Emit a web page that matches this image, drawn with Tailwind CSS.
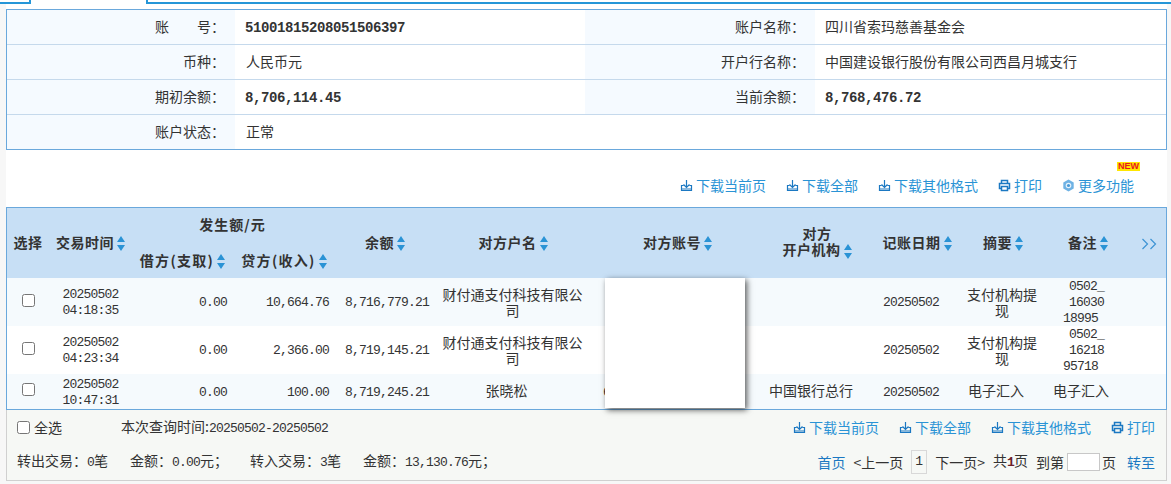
<!DOCTYPE html>
<html lang="zh-CN">
<head>
    <meta charset="UTF-8">
    <title>账户明细</title>
    <script src="https://cdn.jsdelivr.net/npm/@tailwindcss/browser@4"></script>
</head>
<body class="bg-[#f7f7f7] h-[484px] overflow-hidden font-['Noto_Sans_CJK_SC',sans-serif] text-[14px] leading-[16px] text-[#333]">
    <svg class="hidden">
        <symbol id="sort" viewBox="0 0 8 15"><path d="M4 0L8 6H0Z M0 9H8L4 15Z" fill="#2a93d5"/></symbol>
        <symbol id="dl" viewBox="0 0 13 13"><path d="M6.5 1V8M3.5 5.5L6.5 8.5L9.500 5.5M3.500 6.500H1.500V11.500H11.500V6.500H9.500M1.500 10H11.500" fill="none" stroke="#1b78c2" stroke-width="1.200"/></symbol>
        <symbol id="print" viewBox="0 0 13 13"><path d="M3.500 4V1.500H9.500V4M3 9.500H1.500V4.500H11.500V9.500H10M3.500 7.500H9.500V11.500H3.500Z" fill="none" stroke="#1b78c2" stroke-width="1.500"/></symbol>
        <symbol id="gear" viewBox="0 0 13 13"><path d="M6.500 0.500L11.700 3.500V9.500L6.500 12.500L1.300 9.500V3.500Z" fill="#6fb2e4"/><circle cx="6.500" cy="6.500" r="2.800" fill="#e8f3fb"/><circle cx="6.500" cy="6.500" r="1.600" fill="#4a9bd8"/></symbol>
    </svg>

    <!-- 顶部标签线 -->
    <div class="flex h-[4px] bg-white">
        <div class="w-[31px] border-b-2 border-r-2 border-[#2596d8]"></div>
        <div class="w-[115px]"></div>
        <div class="flex-1 border-b-2 border-l-2 border-[#2596d8]"></div>
    </div>

    <div class="w-[1161px] ml-[6px] bg-white">
        <div class="h-[5px]"></div>

        <!-- 账户信息 -->
        <div class="border border-[#6aa8dc]">
            <div class="grid grid-cols-[228px_350px_230px_1fr] h-[35px] border-b border-[#c5d9ec] items-stretch">
                <div class="bg-[#f5faff] flex items-center justify-end pr-[10px] pb-[2px]">账　　号：</div>
                <div class="flex items-center pl-[10px] pt-[1px] font-['Liberation_Mono'] font-bold text-[14px] tracking-[-0.400px]">51001815208051506397</div>
                <div class="bg-[#f5faff] flex items-center justify-end pr-[10px] pb-[2px]">账户名称：</div>
                <div class="flex items-center pl-[10px] pb-[2px]">四川省索玛慈善基金会</div>
            </div>
            <div class="grid grid-cols-[228px_350px_230px_1fr] h-[35px] border-b border-[#c5d9ec]">
                <div class="bg-[#f5faff] flex items-center justify-end pr-[10px] pb-[2px]">币种：</div>
                <div class="flex items-center pl-[11px] pb-[2px]">人民币元</div>
                <div class="bg-[#f5faff] flex items-center justify-end pr-[10px] pb-[2px]">开户行名称：</div>
                <div class="flex items-center pl-[10px] pb-[2px]">中国建设银行股份有限公司西昌月城支行</div>
            </div>
            <div class="grid grid-cols-[228px_350px_230px_1fr] h-[35px] border-b border-[#c5d9ec]">
                <div class="bg-[#f5faff] flex items-center justify-end pr-[10px] pb-[2px]">期初余额：</div>
                <div class="flex items-center pl-[10px] pt-[1px] font-['Liberation_Mono'] font-bold text-[14px] tracking-[-0.400px]">8,706,114.45</div>
                <div class="bg-[#f5faff] flex items-center justify-end pr-[10px] pb-[2px]">当前余额：</div>
                <div class="flex items-center pl-[10px] pt-[1px] font-['Liberation_Mono'] font-bold text-[14px] tracking-[-0.400px]">8,768,476.72</div>
            </div>
            <div class="grid grid-cols-[228px_350px_230px_1fr] h-[34px]">
                <div class="bg-[#f5faff] flex items-center justify-end pr-[10px] pb-[2px]">账户状态：</div>
                <div class="flex items-center pl-[11px] pb-[2px]">正常</div>
            </div>
        </div>

        <!-- 工具栏 -->
        <div class="relative h-[57px] flex items-end justify-end gap-[20px] pb-[14px] pr-[33px] text-[#2a93d5]">
            <a class="flex items-center gap-[3px]"><svg class="w-[13px] h-[13px]"><use href="#dl"/></svg>下载当前页</a>
            <a class="flex items-center gap-[3px]"><svg class="w-[13px] h-[13px]"><use href="#dl"/></svg>下载全部</a>
            <a class="flex items-center gap-[3px]"><svg class="w-[13px] h-[13px]"><use href="#dl"/></svg>下载其他格式</a>
            <a class="flex items-center gap-[3px]"><svg class="w-[13px] h-[13px]"><use href="#print"/></svg>打印</a>
            <a class="flex items-center gap-[3px]"><svg class="w-[13px] h-[13px]"><use href="#gear"/></svg>更多功能</a>
            <span class="absolute right-[27px] top-[12px] bg-[#ffe600] text-[#e8171f] font-['Liberation_Sans'] font-bold text-[9px] leading-[9px] px-[1px]">NEW</span>
        </div>

        <!-- 交易明细 -->
        <div class="relative border border-[#6aa8dc]">
            <table class="w-[1159px] table-fixed border-collapse">
                <colgroup>
                    <col class="w-[43px]"><col class="w-[83px]"><col class="w-[100px]"><col class="w-[102px]"><col class="w-[100px]"><col class="w-[155px]"><col class="w-[175px]"><col class="w-[110px]"><col class="w-[80px]"><col class="w-[90px]"><col class="w-[85px]"><col class="w-[36px]">
                </colgroup>
                <thead class="bg-[#c7dff5] tracking-[0.500px]">
                    <tr class="h-[35px]">
                        <th rowspan="2" class="font-bold pb-[2px] pr-[1px]">选择</th>
                        <th rowspan="2" class="font-bold whitespace-nowrap pb-[2px] pr-[2px]">交易时间<svg class="inline w-[8px] h-[15px] ml-[3px] align-[-3px]"><use href="#sort"/></svg></th>
                        <th colspan="2" class="font-bold pb-[3px] pr-[3px] tracking-[1px]">发生额/元</th>
                        <th rowspan="2" class="font-bold pb-[2px]">余额<svg class="inline w-[8px] h-[15px] ml-[3px] align-[-3px]"><use href="#sort"/></svg></th>
                        <th rowspan="2" class="font-bold pb-[2px] pl-[1px]">对方户名<svg class="inline w-[8px] h-[15px] ml-[3px] align-[-3px]"><use href="#sort"/></svg></th>
                        <th rowspan="2" class="font-bold pb-[2px]">对方账号<svg class="inline w-[8px] h-[15px] ml-[3px] align-[-3px]"><use href="#sort"/></svg></th>
                        <th rowspan="2" class="font-bold pr-[6px] pb-[3px] leading-[16px]">对方<br>开户机构<svg class="inline w-[8px] h-[15px] ml-[3px] align-[-4px] -mt-[2px]"><use href="#sort"/></svg></th>
                        <th rowspan="2" class="font-bold whitespace-nowrap pb-[2px] pl-[4px]">记账日期<svg class="inline w-[8px] h-[15px] ml-[3px] align-[-3px]"><use href="#sort"/></svg></th>
                        <th rowspan="2" class="font-bold pl-[6px] pb-[2px]">摘要<svg class="inline w-[8px] h-[15px] ml-[3px] align-[-3px]"><use href="#sort"/></svg></th>
                        <th rowspan="2" class="font-bold pb-[2px] pl-[1px]">备注<svg class="inline w-[8px] h-[15px] ml-[3px] align-[-3px]"><use href="#sort"/></svg></th>
                        <th rowspan="2" class="pl-[2px] pb-[2px]"><svg class="inline w-[16px] h-[12px]" viewBox="0 0 16 12"><path d="M1.500 1L6.500 6L1.500 11M9.500 1L14.500 6L9.500 11" fill="none" stroke="#3c93d4" stroke-width="1.200"/></svg></th>
                    </tr>
                    <tr class="h-[35px]">
                        <th class="font-bold whitespace-nowrap pb-[1px] pr-[1px] tracking-[1.300px]">借方(支取)<svg class="inline w-[8px] h-[15px] ml-[3px] align-[-3px]"><use href="#sort"/></svg></th>
                        <th class="font-bold whitespace-nowrap pb-[1px] tracking-[1.300px]">贷方(收入)<svg class="inline w-[8px] h-[15px] ml-[3px] align-[-3px]"><use href="#sort"/></svg></th>
                    </tr>
                </thead>
                <tbody>
                    <tr class="h-[48px] bg-[#f5fafd]">
                        <td class="text-center pr-[1px]"><input type="checkbox" class="w-[13px] h-[13px] align-[1px]"></td>
                        <td class="text-center pr-[2px] pt-[2px] font-['Liberation_Mono'] text-[13px] tracking-[-0.800px]">20250502<br>04:18:35</td>
                        <td class="text-right pr-[6px] pt-[2px] font-['Liberation_Mono'] text-[13px] tracking-[-0.800px]">0.00</td>
                        <td class="text-right pr-[6px] pt-[2px] font-['Liberation_Mono'] text-[13px] tracking-[-0.800px]">10,664.76</td>
                        <td class="text-right pr-[6px] pt-[2px] font-['Liberation_Mono'] text-[13px] tracking-[-0.800px]">8,716,779.21</td>
                        <td class="text-center px-[5px]">财付通支付科技有限公司</td>
                        <td></td>
                        <td></td>
                        <td class="pl-[8px] pt-[2px] font-['Liberation_Mono'] text-[13px] tracking-[-0.800px]">20250502</td>
                        <td class="text-center px-[6px] pl-[10px]">支付机构提现</td>
                        <td class="font-['Liberation_Mono'] text-[13px] tracking-[-0.800px] leading-[16px]"><div class="translate-y-[1px]"><div class="pl-[24px]">0502_</div><div class="pl-[24px]">16030</div><div class="pl-[18px]">18995</div></div></td>
                        <td></td>
                    </tr>
                    <tr class="h-[48px] bg-white">
                        <td class="text-center pr-[1px]"><input type="checkbox" class="w-[13px] h-[13px] align-[1px]"></td>
                        <td class="text-center pr-[2px] pt-[2px] font-['Liberation_Mono'] text-[13px] tracking-[-0.800px]">20250502<br>04:23:34</td>
                        <td class="text-right pr-[6px] pt-[2px] font-['Liberation_Mono'] text-[13px] tracking-[-0.800px]">0.00</td>
                        <td class="text-right pr-[6px] pt-[2px] font-['Liberation_Mono'] text-[13px] tracking-[-0.800px]">2,366.00</td>
                        <td class="text-right pr-[6px] pt-[2px] font-['Liberation_Mono'] text-[13px] tracking-[-0.800px]">8,719,145.21</td>
                        <td class="text-center px-[5px]">财付通支付科技有限公司</td>
                        <td></td>
                        <td></td>
                        <td class="pl-[8px] pt-[2px] font-['Liberation_Mono'] text-[13px] tracking-[-0.800px]">20250502</td>
                        <td class="text-center px-[6px] pl-[10px]">支付机构提现</td>
                        <td class="font-['Liberation_Mono'] text-[13px] tracking-[-0.800px] leading-[16px]"><div class="translate-y-[1px]"><div class="pl-[24px]">0502_</div><div class="pl-[24px]">16218</div><div class="pl-[18px]">95718</div></div></td>
                        <td></td>
                    </tr>
                    <tr class="h-[35px] bg-[#f5fafd]">
                        <td class="text-center pr-[1px] pb-[2px]"><input type="checkbox" class="w-[13px] h-[13px] align-[1px]"></td>
                        <td class="text-center pr-[2px] pt-[2px] font-['Liberation_Mono'] text-[13px] tracking-[-0.800px]">20250502<br>10:47:31</td>
                        <td class="text-right pr-[6px] pt-[2px] font-['Liberation_Mono'] text-[13px] tracking-[-0.800px]">0.00</td>
                        <td class="text-right pr-[6px] pt-[2px] font-['Liberation_Mono'] text-[13px] tracking-[-0.800px]">100.00</td>
                        <td class="text-right pr-[6px] pt-[2px] font-['Liberation_Mono'] text-[13px] tracking-[-0.800px]">8,719,245.21</td>
                        <td class="text-center pr-[17px] pl-[5px] pb-[3px]">张晓松</td>
                        <td class="pl-[13px] pt-[2px] font-['Liberation_Mono'] text-[13px] tracking-[-0.800px]">6</td>
                        <td class="pl-[4px] pb-[3px]">中国银行总行</td>
                        <td class="pl-[8px] pt-[2px] font-['Liberation_Mono'] text-[13px] tracking-[-0.800px]">20250502</td>
                        <td class="pl-[13px] pb-[3px]">电子汇入</td>
                        <td class="pl-[8px] pb-[3px]">电子汇入</td>
                        <td></td>
                    </tr>
                </tbody>
            </table>
            <!-- 遮挡块 -->
            <div class="absolute left-[598px] top-[70px] w-[140px] h-[130px] bg-white shadow-[2px_2px_6px_rgba(0,0,0,0.65)]"></div>
        </div>

        <!-- 底部 -->
        <div class="h-[71px] bg-[#f6f8f5] border-x border-b border-[#d0d0d0] border-t-0 px-[10px] box-border">
            <div class="flex items-center justify-between h-[35px] pb-[1px] pr-[1px]">
                <div class="flex items-center">
                    <input type="checkbox" class="w-[13px] h-[13px] mr-[4px]">
                    <span>全选</span>
                    <span class="ml-[59px]">本次查询时间:<span class="font-['Liberation_Mono'] text-[13px] tracking-[-0.800px]">20250502-20250502</span></span>
                </div>
                <div class="flex items-center gap-[20px] text-[#2a93d5]">
                    <a class="flex items-center gap-[3px]"><svg class="w-[13px] h-[13px]"><use href="#dl"/></svg>下载当前页</a>
                    <a class="flex items-center gap-[3px]"><svg class="w-[13px] h-[13px]"><use href="#dl"/></svg>下载全部</a>
                    <a class="flex items-center gap-[3px]"><svg class="w-[13px] h-[13px]"><use href="#dl"/></svg>下载其他格式</a>
                    <a class="flex items-center gap-[3px]"><svg class="w-[13px] h-[13px]"><use href="#print"/></svg>打印</a>
                </div>
            </div>
            <div class="flex items-center justify-between h-[35px] pb-[2px] pr-[1px]">
                <div class="flex items-center whitespace-pre">
                    <span class="w-[113px]">转出交易：<span class="font-['Liberation_Mono'] text-[13px] tracking-[-0.800px]">0</span>笔</span>
                    <span class="w-[120px]">金额：<span class="font-['Liberation_Mono'] text-[13px] tracking-[-0.800px]">0.00</span>元；</span>
                    <span class="w-[113px]">转入交易：<span class="font-['Liberation_Mono'] text-[13px] tracking-[-0.800px]">3</span>笔</span>
                    <span>金额：<span class="font-['Liberation_Mono'] text-[13px] tracking-[-0.800px]">13,130.76</span>元；</span>
                </div>
                <div class="flex items-center">
                    <a class="text-[#1b78c2]">首页</a>
                    <span class="ml-[8px]">&lt;上一页</span>
                    <span class="ml-[8px] w-[16px] h-[24px] border border-[#d8d8d8] flex items-center justify-center font-['Liberation_Mono'] text-[13px]">1</span>
                    <span class="ml-[8px]">下一页&gt;</span>
                    <span class="ml-[8px]">共<b class="font-['Liberation_Mono'] text-[#6b1f2a] text-[13px] tracking-[-0.800px]">1</b>页</span>
                    <span class="ml-[8px]">到第</span>
                    <input type="text" class="ml-[3px] w-[33px] h-[18px] bg-white border border-[#c8c8c8]">
                    <span class="ml-[2px]">页</span>
                    <a class="ml-[11px] text-[#1b78c2]">转至</a>
                </div>
            </div>
        </div>
    </div>
</body>
</html>
